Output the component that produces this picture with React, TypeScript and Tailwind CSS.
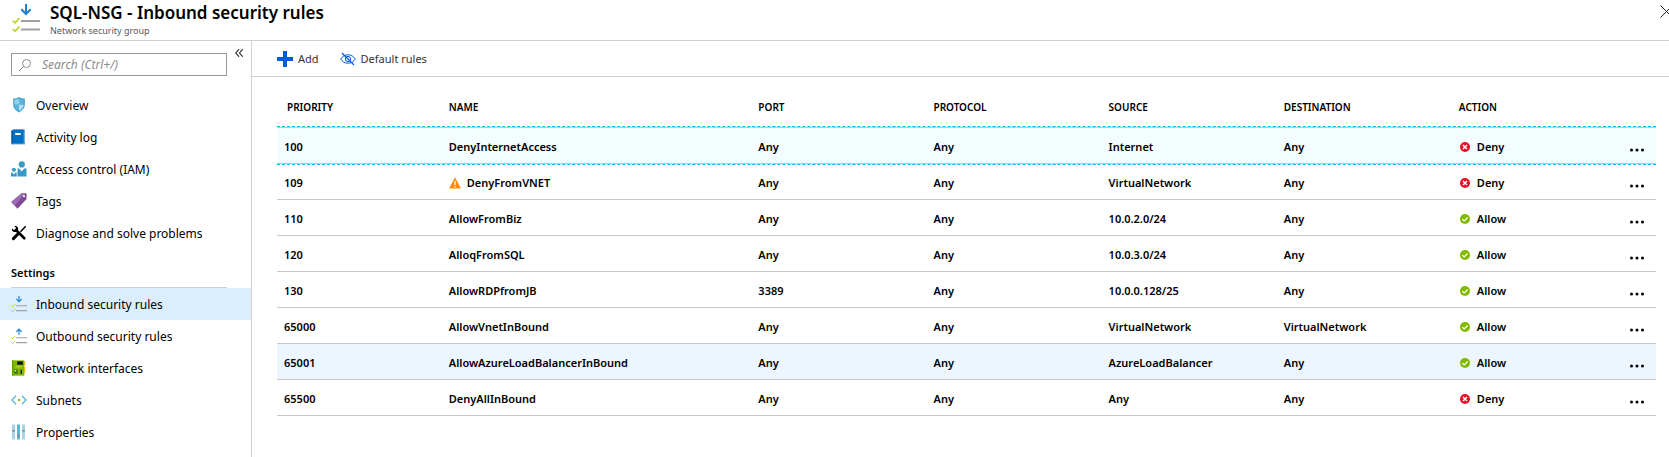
import React from "react";

type IconProps = { className?: string };

function RulesIcon({ up = false, className = "h-4 w-4" }: IconProps & { up?: boolean }) {
  return (
    <svg viewBox="0 0 28 28" className={className} fill="none" aria-hidden="true">
      <g transform={up ? "matrix(1 0 0 -1 0 12)" : undefined}>
        <path d="M14 0v9.5M9.300 5.200L14 10l4.700-4.800" stroke="#1b80cf" strokeWidth="2" />
      </g>
      <path d="M9 17h19M9 25.500h19" stroke="#a0a1a2" strokeWidth="2" />
      <path d="M.7 16.500l2.400 2.300L7.500 14M.7 25l2.400 2.300L7.500 22.500" stroke="#b8d432" strokeWidth="1.700" />
    </svg>
  );
}

function ShieldIcon() {
  return (
    <svg viewBox="0 0 16 16" className="h-4 w-4" aria-hidden="true">
      <path d="M8 0c1.500 1 3.600 1.600 5.800 1.600v6c0 3.600-2.900 6.200-5.800 7.900C5.100 13.800 2.200 11.200 2.200 7.600v-6C4.400 1.600 6.500 1 8 0z" fill="#3e9fc9" />
      <path d="M8 1.500v6.300H3.300V2.700C5 2.600 6.700 2.200 8 1.500z" fill="#8fd0ec" />
      <path d="M8 1.500c1.300.7 3 1.100 4.700 1.200v5.100H8z" fill="#5db4dc" />
      <path d="M3.300 7.800H8v6.400c-2.700-1.700-4.700-3.800-4.700-6.400z" fill="#5db4dc" />
      <path d="M8 7.800h4.700c0 2.600-2 4.700-4.700 6.400z" fill="#b5e0f3" />
    </svg>
  );
}

function BookIcon() {
  return (
    <svg viewBox="0 0 16 16" className="h-4 w-4" aria-hidden="true">
      <path d="M2.500.5H14V15H2.500z" fill="#6cb2e6" />
      <path d="M.5 1.500L2.500.5h10.200v14H.5z" fill="#0072c6" />
      <path d="M.5 1.500h1.400V15.200H.5z" fill="#00559b" />
      <path d="M1 14.300h13v1H1z" fill="#2b86cf" />
      <path d="M4.200 4h5.600v2H4.200z" fill="#fff" />
    </svg>
  );
}

function PeopleIcon() {
  return (
    <svg viewBox="0 0 16 16" className="h-4 w-4" fill="#3999c6" aria-hidden="true">
      <circle cx="10.800" cy="3.400" r="3.100" />
      <path d="M6.500 7.600h1.700l2.500 3 2.500-3H15.500v7.900h-9z" />
      <circle cx="2.900" cy="8.700" r="2" />
      <path d="M0 11.500h1.200l1.700 1.900 1.600-1.900h1.200v4H0z" />
    </svg>
  );
}

function TagIcon() {
  return (
    <svg viewBox="0 0 16 16" className="h-4 w-4" aria-hidden="true">
      <path d="M10.300.6L15 .3l.7 1.200-.4 4.800L6.500 15.700.3 9z" fill="#804998" />
      <path d="M10.300.6L.3 9l3.500 3.700L14 .4z" fill="#9a6bb0" />
      <circle cx="13" cy="3.100" r="1.100" fill="#fff" />
    </svg>
  );
}

function ToolsIcon() {
  return (
    <svg viewBox="0 0 16 16" className="h-4 w-4" fill="none" aria-hidden="true">
      <path d="M14.700 1.300L9.500 6.700" stroke="#000" strokeWidth="1.500" />
      <path d="M7.700 8.300L2.400 13.600" stroke="#000" strokeWidth="3" strokeLinecap="round" />
      <path d="M5 5l8.300 8.300" stroke="#000" strokeWidth="2.700" strokeLinecap="round" />
      <path d="M3.300.9l1.700 1.800-.5 1.800-1.800.5L1 3.300C.6 5 1.300 6.300 2.700 6.900c1.200.4 2.900.2 3.700-.8s1-2.200.5-3.300C6.300 1.400 5 .6 3.300.9z" fill="#000" />
    </svg>
  );
}

function NicIcon() {
  return (
    <svg viewBox="0 0 16 16" className="h-4 w-4" aria-hidden="true">
      <path d="M12 1.500h2.500v4H12zM12 7h2.500v6H12z" fill="#fcd116" />
      <path d="M1 .3h12.300v15.400H1z" fill="#7fba00" />
      <path d="M1 .3h1.300v15.400H1z" fill="#5e9b00" />
      <path d="M6.200 1.400h5.700v3.300H6.200z" fill="#111" />
      <path d="M3.500 9.500h3.200v4.200H3.500z" fill="#3c6500" />
      <path d="M9.500 9.800H11v4.300H9.500z" fill="#222" />
      <path d="M4.500 6h6.300v1.300H4.500z" fill="#b8d432" />
      <path d="M4 10h1.300v1.500H4z" fill="#eee" />
    </svg>
  );
}

function SubnetIcon() {
  return (
    <svg viewBox="0 0 16 16" className="h-4 w-4" fill="none" aria-hidden="true">
      <path d="M5 3.800L1 8l4 4.200M11 3.800L15 8l-4 4.200" stroke="#59b4d9" strokeWidth="1.300" />
      <circle cx="8" cy="8" r="1.200" fill="#7fba00" />
    </svg>
  );
}

function SlidersIcon() {
  return (
    <svg viewBox="0 0 16 16" className="h-4 w-4" aria-hidden="true">
      <path d="M1 .5h3v15H1zM11 .5h3v15h-3z" fill="#a5d3e9" />
      <path d="M6 .5h3v15H6z" fill="#59b4d9" />
      <path d="M1 6h3v1.500H1zM6 11h3v1.500H6zM11 6h3v1.500h-3z" fill="#8a8a8a" />
    </svg>
  );
}

function SearchIcon() {
  return (
    <svg viewBox="0 0 14 14" className="h-3.5 w-3.5 shrink-0" fill="none" stroke="#8a8a8a" aria-hidden="true">
      <circle cx="8.500" cy="5.500" r="4" />
      <path d="M5.600 8.400L1 13" />
    </svg>
  );
}

function HiddenEyeIcon() {
  return (
    <svg viewBox="0 0 16 14" className="h-3.5 w-4" fill="none" stroke="#015cda" aria-hidden="true">
      <path d="M.8 7C2.500 4.200 5 2.800 8 2.800S13.500 4.200 15.200 7C13.500 9.800 11 11.200 8 11.200S2.500 9.800.8 7z" />
      <circle cx="8" cy="7" r="2.600" />
      <path d="M2 1l12 12" strokeWidth="1.200" />
    </svg>
  );
}

function StatusIcon({ deny }: { deny: boolean }) {
  return (
    <svg viewBox="0 0 10 10" className="mb-0.5 h-2.5 w-2.5" fill="none" stroke="#fff" aria-hidden="true">
      <circle cx="5" cy="5" r="5" fill={deny ? "#e81123" : "#7fba00"} stroke="none" />
      {deny ? <path d="M3 3l4 4M7 3L3 7" strokeWidth="1.500" /> : <path d="M2.400 5.200l1.800 1.700L7.600 3.500" strokeWidth="1.300" />}
    </svg>
  );
}

function WarningIcon() {
  return (
    <svg viewBox="0 0 12 12" className="mb-0.5 h-3 w-3" aria-hidden="true">
      <path d="M6 .3L11.900 11.500H.1z" fill="#ff8c00" />
      <path d="M5.400 4h1.300v4H5.400zM5.400 9h1.300v1.300H5.400z" fill="#fff" />
    </svg>
  );
}

const mainLinks = [
  { label: "Overview", icon: <ShieldIcon /> },
  { label: "Activity log", icon: <BookIcon /> },
  { label: "Access control (IAM)", icon: <PeopleIcon /> },
  { label: "Tags", icon: <TagIcon /> },
  { label: "Diagnose and solve problems", icon: <ToolsIcon /> },
];

const settingsLinks = [
  { label: "Inbound security rules", icon: <RulesIcon />, active: true },
  { label: "Outbound security rules", icon: <RulesIcon up /> },
  { label: "Network interfaces", icon: <NicIcon /> },
  { label: "Subnets", icon: <SubnetIcon /> },
  { label: "Properties", icon: <SlidersIcon /> },
];

const rules = [
  { priority: "100", name: "DenyInternetAccess", port: "Any", source: "Internet", destination: "Any", action: "Deny", selected: true },
  { priority: "109", name: "DenyFromVNET", port: "Any", source: "VirtualNetwork", destination: "Any", action: "Deny", warning: true },
  { priority: "110", name: "AllowFromBiz", port: "Any", source: "10.0.2.0/24", destination: "Any", action: "Allow" },
  { priority: "120", name: "AlloqFromSQL", port: "Any", source: "10.0.3.0/24", destination: "Any", action: "Allow" },
  { priority: "130", name: "AllowRDPfromJB", port: "3389", source: "10.0.0.128/25", destination: "Any", action: "Allow" },
  { priority: "65000", name: "AllowVnetInBound", port: "Any", source: "VirtualNetwork", destination: "VirtualNetwork", action: "Allow" },
  { priority: "65001", name: "AllowAzureLoadBalancerInBound", port: "Any", source: "AzureLoadBalancer", destination: "Any", action: "Allow", hovered: true },
  { priority: "65500", name: "DenyAllInBound", port: "Any", source: "Any", destination: "Any", action: "Deny" },
];

function NavList({ links }: { links: { label: string; icon: React.ReactNode; active?: boolean }[] }) {
  return (
    <ul>
      {links.map((link) => (
        <li key={link.label}>
          <a
            href="#"
            aria-current={link.active ? "page" : undefined}
            className={`flex h-8 items-center gap-[9px] pl-[11px] ${link.active ? "bg-[#dbeefe]" : ""}`}
          >
            {link.icon}
            <span className="pt-0.5 whitespace-nowrap">{link.label}</span>
          </a>
        </li>
      ))}
    </ul>
  );
}

export default function App() {
  return (
    <div className="flex min-h-screen flex-col overflow-hidden bg-white font-['Noto_Sans',sans-serif] text-[12px] text-black">
      <header className="flex h-[41px] items-start border-b border-[#d1d1d1] pl-3">
        <RulesIcon className="mt-1 h-7 w-7 shrink-0" />
        <div className="min-w-0 grow pt-px pl-2.5">
          <h1 className="text-[17px] leading-6 font-semibold">SQL-NSG - Inbound security rules</h1>
          <p className="text-[9px] leading-3 text-[#595959]">Network security group</p>
        </div>
        <button type="button" aria-label="Close" className="-mr-2 mt-[5px] shrink-0 pr-1">
          <svg viewBox="0 0 13 13" className="h-[13px] w-[13px]" stroke="#222" aria-hidden="true">
            <path d="M.5.500l12 12M12.500.500l-12 12" />
          </svg>
        </button>
      </header>

      <div className="flex grow">
        <nav className="w-[252px] shrink-0 border-r border-[#d1d1d1]">
          <div className="flex items-start pt-3 pl-[11px]">
            <label className="flex h-[23px] w-[216px] items-center gap-2.5 border border-[#999] pl-1.5">
              <SearchIcon />
              <input
                type="search"
                aria-label="Search"
                placeholder="Search (Ctrl+/)"
                className="min-w-0 grow text-[12px] leading-4 italic outline-none placeholder:text-[#8c8c8c]"
              />
            </label>
            <button type="button" aria-label="Collapse menu" className="ml-2">
              <svg viewBox="0 0 8 8" className="-mt-1 h-2 w-2" fill="none" stroke="#222" strokeWidth="1.100" aria-hidden="true">
                <path d="M4 .3L.8 4 4 7.700M7.700.3L4.500 4l3.200 3.700" />
              </svg>
            </button>
          </div>
          <div className="pt-[13px]">
            <NavList links={mainLinks} />
          </div>
          <h2 className="mr-6 ml-[11px] h-[39px] border-b border-[#d1d1d1] pt-3.5 text-[11px] leading-5 font-semibold">Settings</h2>
          <NavList links={settingsLinks} />
        </nav>

        <main className="min-w-0 grow">
          <div className="flex h-9 items-center gap-[21px] border-b border-[#d1d1d1] pl-[25px] text-[11px] text-[#333]">
            <button type="button" className="flex items-center gap-[5px]">
              <svg viewBox="0 0 16 16" className="h-4 w-4" aria-hidden="true">
                <path d="M6 0h4v6h6v4h-6v6H6v-6H0V6h6z" fill="#015cda" />
              </svg>
              <span className="pt-0.5">Add</span>
            </button>
            <button type="button" className="flex items-center gap-[5px]">
              <HiddenEyeIcon />
              <span className="pt-0.5">Default rules</span>
            </button>
          </div>

          <div className="pr-[13px] pl-[25px]">
            <table className="w-full table-fixed border-separate border-spacing-0 text-left text-[11px]">
              <colgroup>
                <col className="w-[11.95%]" />
                <col className="w-[22.45%]" />
                <col className="w-[12.7%]" />
                <col className="w-[12.7%]" />
                <col className="w-[12.7%]" />
                <col className="w-[12.7%]" />
                <col />
                <col className="w-[50px]" />
              </colgroup>
              <thead>
                <tr className="h-[51px] text-[10px] *:border-b *:border-[#c8c8c8] *:p-0 *:pt-2.5 *:pl-[7px] *:font-semibold">
                  <th scope="col"><span className="pl-[3px]">PRIORITY</span></th>
                  <th scope="col">NAME</th>
                  <th scope="col">PORT</th>
                  <th scope="col">PROTOCOL</th>
                  <th scope="col">SOURCE</th>
                  <th scope="col">DESTINATION</th>
                  <th scope="col">ACTION</th>
                  <th scope="col" aria-label="Menu"></th>
                </tr>
              </thead>
              <tbody>
                {rules.map((rule) => (
                  <tr
                    key={rule.priority}
                    className={`h-9 font-semibold *:border-b *:border-[#c8c8c8] *:p-0 *:pt-1 *:pl-[7px] ${
                      rule.selected ? "relative bg-[#f3fcfe]" : rule.hovered ? "bg-[#edf6ff]" : ""
                    }`}
                  >
                    <td>
                      {rule.selected && (
                        <span className="pointer-events-none absolute inset-x-0 -top-0.5 -bottom-px border-y border-dashed border-[#00bcf2]" />
                      )}
                      {rule.priority}
                    </td>
                    <td>
                      <span className="flex items-center gap-1.5">
                        {rule.warning && <WarningIcon />}
                        {rule.name}
                      </span>
                    </td>
                    <td>{rule.port}</td>
                    <td>Any</td>
                    <td>{rule.source}</td>
                    <td>{rule.destination}</td>
                    <td>
                      <span className="flex items-center gap-[7px] pl-px">
                        <StatusIcon deny={rule.action === "Deny"} />
                        {rule.action}
                      </span>
                    </td>
                    <td>
                      <button type="button" aria-label="More actions" className="ml-4 block pt-1">
                        <svg viewBox="0 0 16 4" className="h-1 w-4" aria-hidden="true">
                          <circle cx="2.500" cy="2" r="1.500" />
                          <circle cx="8" cy="2" r="1.500" />
                          <circle cx="13.500" cy="2" r="1.500" />
                        </svg>
                      </button>
                    </td>
                  </tr>
                ))}
              </tbody>
            </table>
          </div>
        </main>
      </div>
    </div>
  );
}
